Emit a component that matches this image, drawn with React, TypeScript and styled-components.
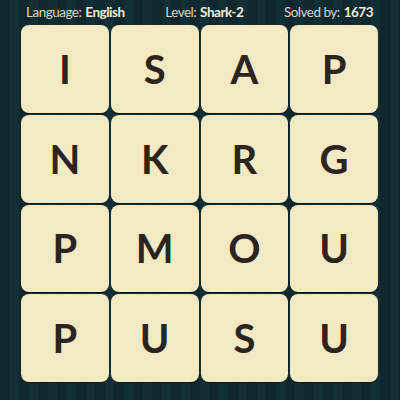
import React from "react";
import styled, { createGlobalStyle } from "styled-components";

const Global = createGlobalStyle`
  html, body { margin: 0; padding: 0; }
  body { width: 400px; height: 400px; overflow: hidden; }
`;

const Page = styled.div`
  width: 400px;
  height: 400px;
  box-sizing: border-box;
  background-color: #11292f;
  background-image: repeating-linear-gradient(
    90deg,
    #0f272d 0px,
    #0f272d 10px,
    #132f35 10px,
    #132f35 19px
  );
  display: flex;
  flex-direction: column;
  font-family: "Lato", "Liberation Sans", sans-serif;
`;

const Header = styled.div`
  height: 25px;
  display: flex;
  align-items: center;
  justify-content: space-between;
  padding: 0 27px 1px 26px;
  box-sizing: border-box;
  color: #d9d5bf;
  font-size: 13.5px;
  letter-spacing: -0.5px;
`;

const Stat = styled.span`
  white-space: nowrap;
`;

const Value = styled.b`
  font-weight: 700;
  color: #f1ecd6;
  margin-left: 4px;
`;

const Board = styled.div`
  margin-left: 21px;
  width: 357px;
  height: 357px;
  display: grid;
  grid-template-columns: repeat(4, 1fr);
  grid-template-rows: repeat(4, 1fr);
  gap: 2px;
`;

const Tile = styled.div`
  background: #f3eac4;
  border-radius: 8px;
  box-shadow: 0 1px 0 #081a1e;
  display: flex;
  align-items: center;
  justify-content: center;
  color: #2b241f;
  font-size: 40px;
  font-weight: 700;
  line-height: 1;
`;

const letters = ["I", "S", "A", "P", "N", "K", "R", "G", "P", "M", "O", "U", "P", "U", "S", "U"];

export default function App() {
  return (
    <>
      <Global />
      <Page>
        <Header>
          <Stat>
            Language:<Value>English</Value>
          </Stat>
          <Stat>
            Level:<Value>Shark-2</Value>
          </Stat>
          <Stat>
            Solved by:<Value>1673</Value>
          </Stat>
        </Header>
        <Board>
          {letters.map((l, i) => (
            <Tile key={i}>{l}</Tile>
          ))}
        </Board>
      </Page>
    </>
  );
}
